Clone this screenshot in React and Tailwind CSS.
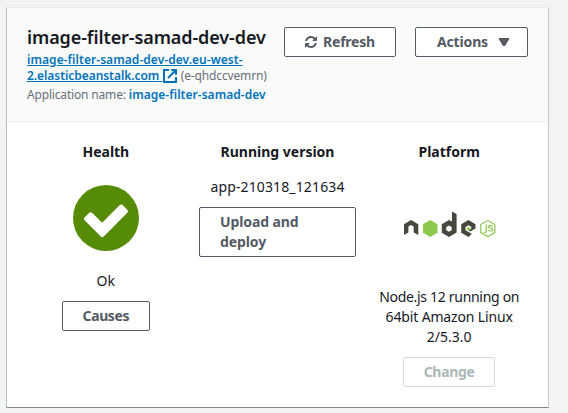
import React from 'react';

const buttonBase = 'flex items-center rounded-[2px] border bg-white text-[14px] leading-5 font-bold';

function ExternalIcon() {
  return (
    <svg className="mr-[4px] ml-[0.5px] inline-block h-[14px] w-[14px] align-[-3px]" viewBox="0 0 14 14" fill="none" stroke="#0073bb" strokeWidth="2">
      <path d="M6 1H1v12h12V8M8.3 1H13v4.7M13 1 5 9" />
    </svg>
  );
}

function RefreshIcon() {
  return (
    <svg className="h-[12px] w-[12px]" viewBox="0 0 1536 1536" fill="#545b64">
      <path d="M1511 928q0 5-1 7-64 268-268 434.500T764 1536q-146 0-282.500-55T238 1324l-129 129q-19 19-45 19t-45-19-19-45V960q0-26 19-45t45-19h448q26 0 45 19t19 45-19 45l-137 137q71 66 161 102t187 36q134 0 250-65t186-179q11-17 53-117 8-23 30-23h192q13 0 22.500 9.500t9.500 22.500zm25-800v448q0 26-19 45t-45 19h-448q-26 0-45-19t-19-45 19-45l138-138Q969 256 768 256q-134 0-250 65T332 500q-11 17-53 117-8 23-30 23H50q-13 0-22.500-9.500T18 608v-7q65-268 270-434.500T768 0q146 0 284 55.500T1297 212l130-129q19-19 45-19t45 19 19 45z" />
    </svg>
  );
}

function NodeLogo() {
  return (
    <svg className="h-[27px] w-[92px]" viewBox="0 0 92 27" fill="none">
      <path fill="#46483e" fillRule="evenodd" d="M0 24V13.300L7 9l7.300 4.300V24l-4.600-2.600V15.500L7 14l-2.600 1.500v5.900zM48 .5l4.600 2.500v18.500L45 26l-7.200-4.300v-8.400L45 9l3 1.600zM45 14.600l-2.700 1.500v3.100l2.700 1.600 2.700-1.600v-3.100z" />
      <path fill="#8cc84b" d="m26.200 9 7.300 4.300v8.400L26.200 26 19 21.700v-8.400z" />
      <path fill="#46483e" d="m64.500 9 7 4.200v4.300l-5.300 3-1.500-1.200 2.600-1.800v-1.700l-2.800-1.600-3 1.700v3.300l3 1.700 3.300 1.900L64.500 26l-7.300-4.300v-8.400z" />
      <path fill="#8cc84b" d="m64.500 16 1.800 1v1.800l-1.800 1-1.700-1V17z" />
      <path stroke="#8cc84b" strokeWidth="1.200" d="m83.800 9.600 7 4v8l-7 4-7-4v-8z" />
      <path stroke="#8cc84b" strokeWidth="1.250" d="M82.300 13.500v6.500c0 1.300-.7 1.700-2.300 1.200M88.500 15.100c-1.400-.8-4.100-.8-4.100.7 0 2.100 4.400.7 4.400 2.700 0 1.800-3.700 1.600-4.700.6" />
    </svg>
  );
}

export default function App() {
  return (
    <div className="h-[413px] w-[568px] overflow-hidden bg-[#f2f3f3] pt-[7px] pl-[6px] font-['Noto_Sans','Open_Sans',sans-serif] text-[#16191f]">
      <main className="h-[401px] w-[543px] border border-t-[#eaeded] border-r-[#c3c9c9] border-b-[#7f8788] border-l-[#b8bfbf] bg-white">
        <header className="flex h-[114px] justify-between border-b border-[#eaeded] bg-[#fafafa] pt-[19px] pr-[20px] pl-[20px]">
          <div className="w-[245px] whitespace-nowrap">
            <h1 className="h-[25px] text-[18px] leading-[20px] font-semibold tracking-[-0.1px]">image-filter-samad-dev-dev</h1>
            <div className="text-[12px] leading-[16px] text-[#687078]">
              <a className="font-semibold tracking-[0.05px] text-[#0073bb] underline">image-filter-samad-dev-dev.eu-west-</a>
              <br />
              <a className="font-semibold tracking-[-0.06px] text-[#0073bb] underline">2.elasticbeanstalk.com{'\u00a0'}</a>
              <ExternalIcon />
              <span className="tracking-[-0.15px]">(e-qhdccvemrn)</span>
            </div>
            <p className="mt-[2px] text-[12px] leading-[18px] text-[#687078]">
              <span className="tracking-[-0.17px]">Application name: </span>
              <a className="font-semibold tracking-[0.03px] text-[#0073bb]">image-filter-samad-dev</a>
            </p>
          </div>
          <div className="flex gap-[19px]">
            <button className={`${buttonBase} h-[30px] w-[112px] justify-center gap-[6px] border-[#545b64] tracking-[-0.2px] text-[#545b64]`}>
              <RefreshIcon />
              Refresh
            </button>
            <button className={`${buttonBase} h-[30px] w-[113px] justify-between border-[#545b64] pr-[18px] pl-[21px] tracking-[-0.15px] text-[#545b64]`}>
              Actions
              <svg className="h-[8px] w-[10px]" viewBox="0 0 10 8" fill="#545b64"><path d="M0 0h10v1.500L6 8H4L0 1.500z" /></svg>
            </button>
          </div>
        </header>
        <div className="grid grid-cols-3 px-[13px] pt-[20px] text-center text-[14px] leading-[20px]">
          <section className="flex flex-col items-center">
            <h2 className="font-bold">Health</h2>
            <svg className="mt-[23px] h-[66px] w-[66px]" viewBox="0 0 66 66">
              <circle cx="33" cy="33" r="33" fill="#558b05" />
              <path fill="#fff" d="m11.500 32.500 4.500-4.600q1.600-1.500 3.200 0l10 9.800 17.300-17.400q1.700-1.700 3.400 0l4.400 4.500q1.500 1.500 0 3L31 51.300q-1.700 1.700-3.400 0L11.500 35.200q-1.300-1.300 0-2.700z" />
            </svg>
            <p className="mt-[20px]">Ok</p>
            <button className={`${buttonBase} mt-[10px] h-[30px] w-[88px] justify-center border-[#545b64] tracking-[-0.4px] text-[#545b64]`}>Causes</button>
          </section>
          <section className="flex flex-col items-center">
            <h2 className="font-bold">Running version</h2>
            <p className="mt-[15px] tracking-[0.13px]">app-210318_121634</p>
            <button className={`${buttonBase} mt-[10px] h-[50px] w-[157px] border-[#545b64] pl-[20px] text-left tracking-[-0.1px] text-[#545b64]`}>Upload and<br />deploy</button>
          </section>
          <section className="flex flex-col items-center">
            <h2 className="font-bold">Platform</h2>
            <div className="mt-[49px] pl-[1px]"><NodeLogo /></div>
            <p className="mt-[49px] whitespace-nowrap"><span className="tracking-[-0.3px]">Node.js 12 running on</span><br /><span className="tracking-[-0.15px]">64bit Amazon Linux</span><br />2/5.3.0</p>
            <button className={`${buttonBase} mt-[10px] h-[30px] w-[92px] justify-center border-[#d5dbdb] tracking-[-0.3px] text-[#aab7b8]`}>Change</button>
          </section>
        </div>
      </main>
    </div>
  );
}
